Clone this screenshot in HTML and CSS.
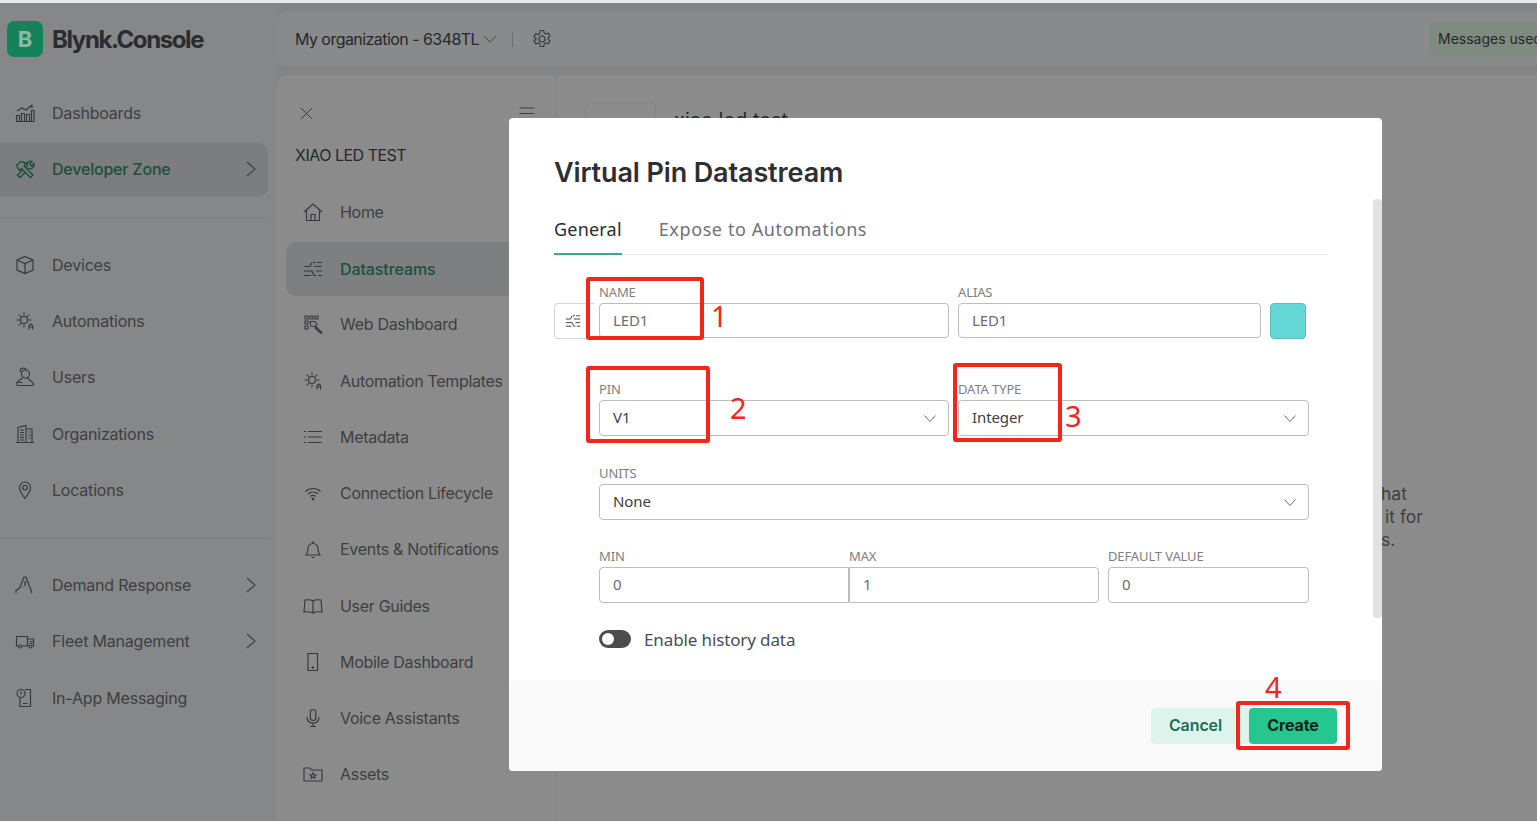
FILE: index.html
```html
<!DOCTYPE html>
<html lang="en">
<head>
<meta charset="utf-8">
<title>Blynk.Console</title>
<link rel="stylesheet" href="styles.css">
</head>
<body>
<div class="stripe"></div>
<div class="app">
  <aside class="sidebar">
    <div class="brand"><span class="logo">B</span><span class="brand-name">Blynk.Console</span></div>
    <nav class="nav">
      <a class="item"><svg class="ic" viewBox="0 0 20 20"><path d="M1.500 18.500v-6h3v6zM6.500 18.500v-8h3v8zM11.500 18.500v-7h3v7zM16.500 18.500v-11h2.500v11zM1 18.500h18M2 8l5-3 4 2 6-5M17 1.500v4"/></svg><span>Dashboards</span></a>
      <a class="item active"><svg class="ic ic-dev" viewBox="0 0 20 20"><path d="M1.500 6.500l4.500-4 5 1.500-2 3 9 9-2.500 2.500-9-9-2 2zM8 11l-5.500 5 2.500 2.500 5.500-5.500M11.500 8.500l.5-2a4 4 0 0 1 1-3.500 4 4 0 0 1 4-.5l-2.500 2.500 2 2 2.500-2.500a4 4 0 0 1-6 4.500"/></svg><span>Developer Zone</span><svg class="chev" viewBox="0 0 10 16"><path d="M1 1l8 7-8 7"/></svg></a>
    </nav>
    <hr class="rule">
    <nav class="nav">
      <a class="item"><svg class="ic" viewBox="0 0 20 20"><path d="M10 1.500l8 3.500v10l-8 3.500-8-3.500v-10zM2 5l8 3.500 8-3.500M10 8.500v10"/></svg><span>Devices</span></a>
      <a class="item"><svg class="ic" viewBox="0 0 20 20"><circle cx="9" cy="9" r="3.500"/><path d="M9 1.500v3M9 13.500v3M1.500 9h3M13.500 9h3M3.700 3.700l2 2M12.300 5.700l2-2M3.700 14.300l2-2M14 18.500v-4l1.800-1.500 1.800 1.500v4M14 16h3.600"/></svg><span>Automations</span></a>
      <a class="item"><svg class="ic" viewBox="0 0 20 20"><circle cx="10.500" cy="7" r="4"/><path d="M6.700 5.500C5 5 4.500 3 6 2s4-1 5.500.500M7.500 11L3 14.500c-2 1.500-1.500 4 .5 4h13.500c2 0 2-2.500 0-3.500l-4.500-4M2.500 15.500h5"/></svg><span>Users</span></a>
      <a class="item"><svg class="ic" viewBox="0 0 20 20"><path d="M1 18.500h18M3 18.500v-15l8-2v17M11 5h6v13.500M5 6h4M5 8.500h4M5 11h4M5 13.500h4M5 16h4M13.500 8h2M13.500 11h2M13.500 14h2"/></svg><span>Organizations</span></a>
      <a class="item"><svg class="ic" viewBox="0 0 20 20"><path d="M10 18.500c-3-4-5.500-7.500-5.500-11a5.500 5.500 0 0 1 11 0c0 3.500-2.500 7-5.500 11z"/><circle cx="10" cy="7.500" r="2.300"/></svg><span>Locations</span></a>
    </nav>
    <hr class="rule rule-b">
    <nav class="nav">
      <a class="item"><svg class="ic" viewBox="0 0 20 20"><path d="M1 18v-3c2 0 3-1 4-3l4-10h2l6 16M8.500 7h3M6.500 12h1M10 7v4"/></svg><span>Demand Response</span><svg class="chev" viewBox="0 0 10 16"><path d="M1 1l8 7-8 7"/></svg></a>
      <a class="item"><svg class="ic" viewBox="0 0 20 20"><path d="M3 15H1.500V5.500h11V15H7M13 8h5.500v7h-1M13 15h1M14.500 10.500h3M14.500 12.500h3"/><circle cx="5" cy="15.500" r="1.500"/><circle cx="15.500" cy="15.500" r="1.500"/></svg><span>Fleet Management</span><svg class="chev" viewBox="0 0 10 16"><path d="M1 1l8 7-8 7"/></svg></a>
      <a class="item"><svg class="ic" viewBox="0 0 20 20"><circle cx="6" cy="5.500" r="4"/><path d="M6 3.500v3M10 1.500h5.500v17H5v-9M8 15.500h4.500"/></svg><span>In-App Messaging</span></a>
    </nav>
  </aside>

  <div class="body">
    <header class="topbar">
      <span class="org">My organization - 6348TL</span>
      <svg class="org-chev" viewBox="0 0 16 9"><path d="M1 1l7 7 7-7"/></svg>
      <span class="sep"></span>
      <svg class="gear" viewBox="0 0 20 20"><circle cx="10" cy="10" r="3"/><path d="M8.300 1.500h3.400l.5 2.500 1.700 1 2.400-.8 1.700 2.900-1.900 1.700v1.400l1.900 1.700-1.700 2.900-2.400-.8-1.700 1-.5 2.500H8.300l-.5-2.500-1.700-1-2.400.8-1.700-2.900 1.900-1.700V9.300L2 7.600l1.700-2.900 2.400.8 1.700-1z"/></svg>
      <span class="badge">Messages used</span>
    </header>
    <div class="work">
      <section class="panel">
        <div class="panel-head">
          <svg class="close" viewBox="0 0 14 14"><path d="M1 1l12 12M13 1L1 13"/></svg>
          <svg class="burger" viewBox="0 0 16 14"><path d="M0 1h16M0 7h16M0 13h16"/></svg>
        </div>
        <div class="panel-title">XIAO LED TEST</div>
        <nav class="subnav">
          <a class="sub"><svg class="ic" viewBox="0 0 20 20"><path d="M1 10l9-8 9 8M3.500 8.500V18.500h13V8.500M8 18.500v-6h4v6"/></svg><span>Home</span></a>
          <a class="sub active"><svg class="ic" viewBox="0 0 20 20"><path d="M10 3.500h2.500M14 3.500h5M1 7.500h6l2-4M11 7.500h8M1 12h8l2 4.500h2M13 12h6M15 16.500h4M1 16.500h7"/></svg><span>Datastreams</span></a>
          <a class="sub"><svg class="ic" viewBox="0 0 20 20"><path d="M2 2h3v3H2zM7 2h3v3H7zM12 2h3v3h-3zM2 7h3v3H2zM2 12h3v3H2zM7 7.500h5l2 3-1.500 2-4.500-.5zM12 12l7 6.500-1 1-6.500-6"/></svg><span>Web Dashboard</span></a>
          <a class="sub"><svg class="ic" viewBox="0 0 20 20"><circle cx="9" cy="9" r="3.500"/><path d="M9 1.500v3M9 13.500v3M1.500 9h3M13.500 9h3M3.700 3.700l2 2M12.300 5.700l2-2M3.700 14.300l2-2M14 18.500v-4l1.800-1.500 1.800 1.500v4M14 16h3.600"/></svg><span>Automation Templates</span></a>
          <a class="sub"><svg class="ic" viewBox="0 0 20 20"><path d="M5 4.500h14M5 10h14M5 15.500h14M1 4.500h2M1 10h2M1 15.500h2"/></svg><span>Metadata</span></a>
          <a class="sub"><svg class="ic" viewBox="0 0 20 20"><path d="M2.500 8.500c4-4 11-4 15 0M5 11c2.800-2.700 7.200-2.700 10 0M7.500 13.500c1.400-1.300 3.600-1.300 5 0"/><circle cx="10" cy="16" r=".8"/></svg><span>Connection Lifecycle</span></a>
          <a class="sub"><svg class="ic" viewBox="0 0 20 20"><path d="M3 16c1.500-2 2-3 2-6.500a5 5 0 0 1 10 0c0 3.500.5 4.500 2 6.500zM8.500 18.500h3M10 2v2"/></svg><span>Events &amp; Notifications</span></a>
          <a class="sub"><svg class="ic" viewBox="0 0 20 20"><path d="M10 5c-2-1.500-5-1.500-8-1L1 16c3-.5 6-.5 9 1 3-1.500 6-1.500 9-1l-1-12c-3-.5-6-.5-8 1zM10 5v12"/></svg><span>User Guides</span></a>
          <a class="sub"><svg class="ic" viewBox="0 0 20 20"><path d="M5 1.500h9.500v17H5z"/><circle cx="9.800" cy="15.500" r=".7"/></svg><span>Mobile Dashboard</span></a>
          <a class="sub"><svg class="ic" viewBox="0 0 20 20"><rect x="7.300" y="1.500" width="5.500" height="11" rx="2.700"/><path d="M4 9c0 4 2.500 6 6 6s6-2 6-6M10 15v3.500M7 18.500h6"/></svg><span>Voice Assistants</span></a>
          <a class="sub"><svg class="ic" viewBox="0 0 20 20"><path d="M1 4h6l1.500 2H19v11H1zM10 9l.9 1.800 2 .2-1.500 1.300.5 1.900-1.900-1-1.900 1 .5-1.900L7.100 11l2-.2z"/></svg><span>Assets</span></a>
        </nav>
      </section>
      <main class="content">
        <div class="title-row"><span class="tile"></span><span class="dev-name">xiao led test</span></div>
        <p class="hidden-copy"><span class="l1">hat</span><span class="l2">it for</span><span class="l3">s.</span></p>
      </main>
    </div>
  </div>
</div>

<div class="modal">
  <div class="modal-body">
    <h1 class="modal-title">Virtual Pin Datastream</h1>
    <div class="tabs"><span class="tab on">General</span><span class="tab">Expose to Automations</span></div>
    <div class="row row-name">
      <span class="icon-box"><svg class="ds" viewBox="0 0 20 20"><path d="M10 3.500h2.500M14 3.500h5M1 7.500h6l2-4M11 7.500h8M1 12h8l2 4.500h2M13 12h6M15 16.500h4M1 16.500h7"/></svg></span>
      <label class="field f-name"><span class="lab">NAME</span><span class="box">LED1</span></label>
      <label class="field f-alias"><span class="lab">ALIAS</span><span class="box">LED1</span></label>
      <span class="swatch"></span>
    </div>
    <div class="row row-ind">
      <label class="field f-name"><span class="lab">PIN</span><span class="box sel tall">V1<svg class="dd" viewBox="0 0 12 7"><path d="M.5.500L6 6.500 11.500.500"/></svg></span></label>
      <label class="field f-type"><span class="lab">DATA TYPE</span><span class="box sel tall">Integer<svg class="dd" viewBox="0 0 12 7"><path d="M.5.500L6 6.500 11.500.500"/></svg></span></label>
    </div>
    <div class="row row-ind row-units">
      <label class="field f-full"><span class="lab">UNITS</span><span class="box sel tall">None<svg class="dd" viewBox="0 0 12 7"><path d="M.5.500L6 6.500 11.500.500"/></svg></span></label>
    </div>
    <div class="row row-ind row-range">
      <label class="field f-min"><span class="lab">MIN</span><span class="box tall join-l">0</span></label>
      <label class="field f-min"><span class="lab">MAX</span><span class="box tall join-r">1</span></label>
      <label class="field f-def"><span class="lab">DEFAULT VALUE</span><span class="box tall">0</span></label>
    </div>
    <div class="toggle-row"><span class="toggle"><span class="knob"></span></span><span class="toggle-text">Enable history data</span></div>
  </div>
  <div class="scroll"></div>
  <footer class="modal-foot"><button class="btn cancel">Cancel</button><button class="btn create">Create</button></footer>

  <span class="mark m1"></span><span class="num n1">1</span>
  <span class="mark m2"></span><span class="num n2">2</span>
  <span class="mark m3"></span><span class="num n3">3</span>
  <span class="mark m4"></span><span class="num n4">4</span>
</div>
</body>
</html>
```

FILE: styles.css
```css
* { box-sizing: border-box; }
html, body { margin: 0; height: 821px; overflow: hidden; }
body { position: relative; background: #828486; font-family: Inter, "Liberation Sans", sans-serif; color: #3d3f42; }
.stripe { height: 3px; background: #e8e8e8; }
.app { display: flex; height: 818px; }
svg { display: block; flex: none; fill: none; stroke: currentColor; }

.sidebar { width: 277px; flex: none; background: #858789; padding-top: 18px; }
.brand { display: flex; align-items: center; gap: 9px; padding-left: 7px; height: 36px; }
.logo { width: 36px; height: 36px; border-radius: 7px; background: #16825a; color: #8fb8a5; font: 700 22px/36px Inter, sans-serif; text-align: center; }
.brand-name { font-size: 24px; font-weight: 700; letter-spacing: -1.4px; color: #2a2c30; }
.nav { display: block; width: 268px; }
.brand + .nav { margin-top: 28px; }
.item { display: flex; align-items: center; height: 56.25px; padding-left: 15px; font-size: 16px; letter-spacing: -.2px; position: relative; }
.ic { width: 20px; height: 20px; stroke-width: 1.15; color: #36383b; margin-right: 17px; }
.item.active { color: #1c4f3c; font-weight: 500; }
.item.active::before { content: ""; position: absolute; inset: 2px 0 1px; background: #7b7d7f; border-radius: 0 10px 10px 0; }
.item.active > * { position: relative; }
.item.active .ic { color: #1c4f3c; }
.item.active .ic-dev { stroke-width: 1.4; }
.chev, .item.active .chev { position: absolute; left: 246px; top: 20px; width: 10px; height: 16px; stroke-width: 1.1; color: #3d3f42; }
.rule { width: 268px; height: 1px; margin: 19.5px 0 18.75px; border: 0; background: #7d7f81; }
.rule-b { height: 2px; margin: 19px 0 18px; }

.body { flex: 1; min-width: 0; display: flex; flex-direction: column; }
.topbar { height: 54px; margin-top: 9px; display: flex; align-items: center; padding-left: 18px; background: #898a8c; border-radius: 10px 0 0 10px; overflow: hidden; flex: none; }
.org { font-size: 16px; letter-spacing: -.55px; color: #26282b; }
.org-chev { width: 14px; height: 8px; margin-left: 4px; color: #3d3f42; stroke-width: 1; }
.sep { width: 1px; height: 15px; background: #6d6f71; margin-left: 15px; }
.gear { width: 20px; height: 20px; margin-left: 19px; color: #36383b; stroke-width: 1.15; }
.badge { margin-left: auto; width: 108px; height: 34px; padding-left: 9px; line-height: 34px; background: #7f8a80; border-radius: 6px 0 0 6px; font-size: 14px; white-space: nowrap; overflow: hidden; color: #26282b; }

.work { flex: 1; display: flex; margin-top: 9px; min-height: 0; }
.panel { width: 280px; flex: none; background: #8b8b8c; border-radius: 10px 0 0 0; border-right: 1px solid #808284; }
.panel-head { display: flex; justify-content: space-between; align-items: center; height: 76px; padding: 0 21px 0 23px; }
.close { width: 13px; height: 13px; stroke-width: 1; color: #36383b; }
.burger { width: 16px; height: 13px; stroke-width: 1; color: #36383b; }
.panel-title { font-size: 16px; letter-spacing: -.5px; color: #26282b; padding-left: 18px; height: 33px; line-height: 9px; }
.subnav { padding-left: 9px; }
.sub { display: flex; align-items: center; height: 56.25px; padding-left: 17px; font-size: 16px; letter-spacing: -.3px; }
.sub .ic { margin-right: 17px; }
.sub.active { background: #7d7f80; border-radius: 10px 0 0 10px; color: #1c4f3c; font-weight: 500; height: 54px; margin: 1.5px 0 .5px; letter-spacing: -.1px; }

.content { flex: 1; min-width: 0; background: #8c8c8c; overflow: hidden; }
.title-row { display: flex; align-items: center; gap: 18px; padding: 27px 0 0 28px; height: 76px; }
.tile { width: 71px; height: 50px; border: 1px solid #828385; border-radius: 6px; }
.dev-name { font-size: 20px; color: #26282b; margin-top: -14px; }
.hidden-copy { margin: 0; padding: 331px 0 0 824px; font-size: 17.5px; line-height: 23px; color: #3d3f42; }
.hidden-copy span { display: block; }
.l2 { padding-left: 4px; }

.modal { position: absolute; left: 509px; top: 118px; width: 873px; height: 653px; background: #fff; border-radius: 4px; font-family: "Noto Sans", "Open Sans", sans-serif; color: #33363a; overflow: hidden; }
.modal-body { padding: 37px 54px 0 45px; height: 563px; }
.modal-title { margin: 0; font: 600 27px/36px Inter, sans-serif; letter-spacing: -.12px; color: #2d2f33; }
.tabs { display: flex; gap: 37px; height: 38px; margin-top: 26px; border-bottom: 1px solid #eaeaea; }
.tab { font-size: 18px; line-height: 25px; letter-spacing: .6px; color: #6f7276; height: 38px; padding-top: 0; }
.tab.on { color: #2a2c30; letter-spacing: .2px; border-bottom: 2px solid #35a98b; }
.row { display: flex; align-items: flex-end; position: relative; }
.row-name { margin-top: 28px; gap: 9px; padding-left: 45px; }
.row-ind { padding-left: 45px; gap: 9px; margin-top: 42px; }
.row-units { margin-top: 28px; }
.row-range { margin-top: 27px; gap: 0; }
.icon-box { position: absolute; left: 0; bottom: -1px; width: 40px; height: 36px; border: 1px solid #d6d6d6; border-right: 0; border-radius: 4px 0 0 4px; display: flex; align-items: center; justify-content: center; color: #3d3f42; }
.ds { width: 16px; height: 16px; stroke-width: 1.2; margin-left: -4px; }
.field { display: block; }
.lab { display: block; font-size: 13px; line-height: 18px; letter-spacing: -.12px; color: #7d7f82; height: 18px; margin-bottom: 2px; white-space: nowrap; }
.box { display: flex; align-items: center; position: relative; height: 35px; padding: 0 0 2px 13px; border: 1px solid #bdbdbd; border-radius: 4px; font-size: 15px; letter-spacing: -.1px; color: #6b6e72; background: #fff; }
.tall { height: 36px; }
.sel { color: #3c3f43; }
.dd { position: absolute; right: 12px; top: 14px; width: 12px; height: 7px; stroke-width: 1; color: #6a6c70; }
.f-name { width: 350px; }
.f-alias { width: 303px; }
.f-type { width: 351px; }
.f-full { width: 710px; }
.f-min { width: 250px; }
.f-def { width: 201px; margin-left: 9px; }
.join-l { border-radius: 4px 0 0 4px; }
.join-r { border-radius: 0 4px 4px 0; border-left-color: #bdbdbd; }
.swatch { width: 36px; height: 36px; background: #63d6d6; border: 1px solid #5bbfc2; border-radius: 4px; margin-bottom: -1px; }
.toggle-row { display: flex; align-items: center; gap: 13px; margin: 25px 0 0 45px; height: 22px; }
.toggle { width: 32px; height: 18px; border-radius: 9px; background: #4d4d4f; padding: 3px; display: block; }
.knob { display: block; width: 12px; height: 12px; border-radius: 50%; background: #fff; }
.toggle-text { font-size: 17px; letter-spacing: -.12px; color: #4a4d50; }
.scroll { position: absolute; left: 864px; top: 81px; width: 9px; height: 419px; background: #e2e2e2; border-radius: 4px; }
.modal-foot { height: 90px; background: #fafafa; display: flex; justify-content: flex-end; gap: 0; padding: 27px 45px 0 0; position: absolute; left: 0; right: 0; bottom: 0; }
.btn { height: 36px; border: 0; border-radius: 4px; font: 600 16px Inter, sans-serif; letter-spacing: -.1px; padding: 0 0 2px; }
.cancel { width: 98px; background: #dcf4ec; color: #1f6b55; padding-right: 9px; }
.create { width: 88px; background: #25c68f; color: #06241a; font-weight: 700; letter-spacing: -.15px; }

.mark { position: absolute; border: 4px solid #f2261a; border-radius: 3px; }
.m1 { left: 77px; top: 159px; width: 118px; height: 63px; }
.m2 { left: 77px; top: 248px; width: 124px; height: 77px; }
.m3 { left: 444px; top: 245px; width: 109px; height: 79px; }
.m4 { left: 727px; top: 583px; width: 114px; height: 49px; }
.num { position: absolute; font: 400 29px/36px "Noto Sans", sans-serif; color: #f2261a; }
.n1 { left: 202px; top: 180px; }
.n2 { left: 221px; top: 272px; }
.n3 { left: 556px; top: 280px; }
.n4 { left: 756px; top: 551px; }
```
